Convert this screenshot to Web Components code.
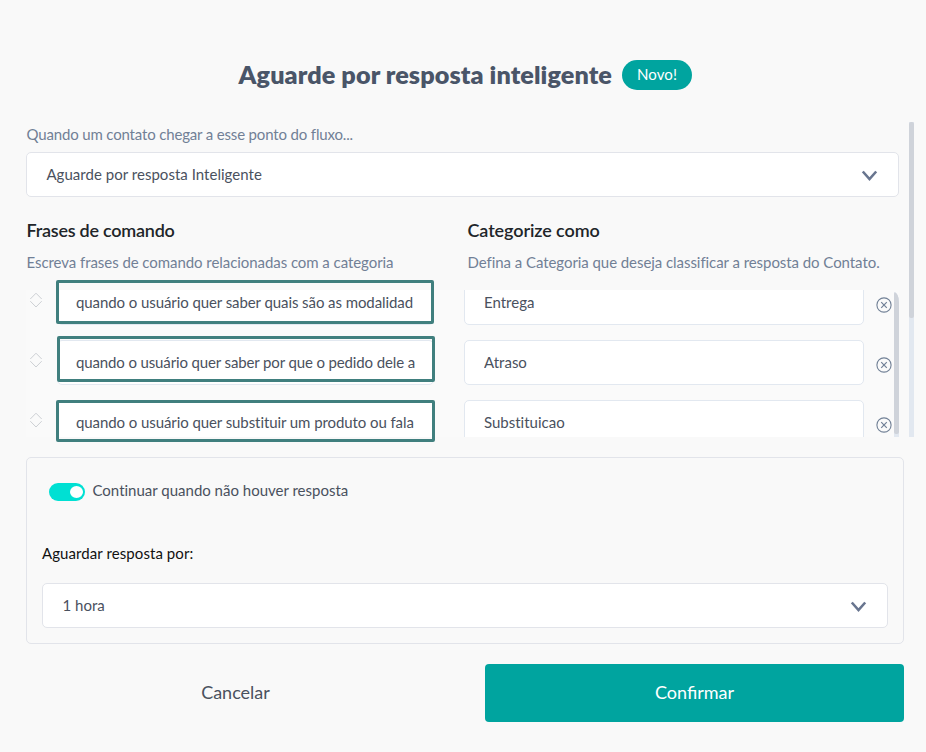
<!DOCTYPE html>
<html lang="pt-BR">
<head>
<meta charset="utf-8">
<title>Aguarde por resposta inteligente</title>
<style>
html,body{margin:0;height:100%;background:#f9f9f9;overflow:hidden}
body{font-family:Lato,"Liberation Sans",sans-serif;font-size:15px;line-height:20px;color:#4a515e}
</style>
</head>
<body>
<flow-dialog></flow-dialog>
<script>
function define(name, html) {
  const t = document.createElement('template');
  t.innerHTML = '<style>*{box-sizing:border-box}:host{box-sizing:border-box}</style>' + html;
  customElements.define(name, class extends HTMLElement {
    connectedCallback() {
      if (this.shadowRoot) return;
      this.attachShadow({mode: 'open'}).append(t.content.cloneNode(true));
    }
  });
}

define('new-badge', `<style>:host{display:flex;align-items:center;justify-content:center;width:70px;height:30px;padding-bottom:2px;border-radius:15px;background:#00a49f;color:#fff;font-size:15px;letter-spacing:.1px}</style><slot></slot>`);

define('select-box', `<style>
:host{display:flex;align-items:center;justify-content:space-between;height:45px;border:1px solid #e2e4ea;border-radius:5px;background:#fff;padding:0 20.5px 0 19.4px}
span{margin-top:-2px;letter-spacing:.03px}
svg{display:block;margin-top:2px}
</style><span><slot></slot></span>
<svg width="17" height="12" viewBox="0 0 17 12"><path d="M1.8 1.5 8.5 9 15.2 1.5" fill="none" stroke="#68758f" stroke-width="2.6"/></svg>`);

define('text-box', `<style>
:host{display:flex;align-items:center;height:45px;border:1px solid #e2e8f0;border-radius:5px;background:#fff;padding:0 19px 2px;font-variant-ligatures:none}
span{overflow:hidden;white-space:nowrap;flex:1;min-width:0}
</style><span><slot></slot></span>`);

define('section-head', `<style>
:host{display:block}
h3{margin:0;font-size:18px;line-height:24px;font-weight:600;color:#212529;letter-spacing:var(--head-spacing)}
p{margin:10px 0 0;color:#718096;white-space:nowrap;letter-spacing:-.06px}
</style><h3><slot name="title"></slot></h3><p><slot></slot></p>`);

define('scroll-rail', `<style>
:host{display:block;width:5px;background:#e2e8f0}
div{background:#cfd3da;border-radius:2px;height:var(--thumb)}
</style><div></div>`);

define('phrase-row', `<style>
:host{display:grid;grid-template-columns:31px 377px 30px 400px 30px;height:45px;align-items:center}
.sort{display:block;margin-top:-5px}
.phrase{letter-spacing:var(--phrase-spacing,-.08px);padding:0 18px 2px}
.close{grid-column:5;justify-self:end;margin:5px 2px 0 0;display:block}
.category{grid-column:4}
</style>
<svg class="sort" width="20" height="18" viewBox="0 0 20 18"><path d="M4.3 8 10 2.2 15.7 8M4.3 10.2 10 16 15.7 10.2" fill="none" stroke="#cdd0d4" stroke-width="1"/></svg>
<text-box class="phrase"><slot name="phrase"></slot></text-box>
<text-box class="category"><slot name="category"></slot></text-box>
<svg class="close" width="16" height="16" viewBox="0 0 16 16" fill="none" stroke="#718096"><circle cx="8" cy="8" r="7.1" stroke-width="1.1"/><path d="M5.2 5.2 10.8 10.8M10.8 5.2 5.2 10.8" stroke-width="1.2"/></svg>`);

define('highlight-frame', `<style>:host{display:block;position:absolute;border:3px solid #407f7e;border-radius:2px}</style>`);

define('toggle-switch', `<style>
:host{display:flex;align-items:center;height:20px;gap:7.5px;font-variant-ligatures:none}
i{display:flex;justify-content:flex-end;width:36px;height:18px;border-radius:9px;background:#00e0d3;padding:3px 2px 3px 0;margin-top:4px}
i::after{content:"";width:13px;height:12px;border-radius:50%;background:#fff}
</style><i></i><span><slot></slot></span>`);

define('action-button', `<style>
:host{display:flex;align-items:center;justify-content:center;height:58px;padding-bottom:2px;border-radius:4px;font-size:18px}
:host([primary]){background:#00a49f;color:#fff}
</style><slot></slot>`);

define('flow-dialog', `<style>
:host{display:block;position:relative;width:926px;height:752px;padding:60px 22px 0 26px}
header{display:flex;gap:10px;justify-content:flex-end;align-items:center;height:30px;padding-right:212px}
h1{margin:-2px 0 0;font-size:25.2px;font-weight:800;line-height:30px;color:#4a5568;white-space:nowrap;letter-spacing:.09px}
.scroll{display:flex;width:888px;height:315px;margin-top:32px;gap:10px;overflow:hidden}
.content{width:873px}
.label{color:#718096;margin-top:2px;margin-bottom:8px;letter-spacing:-.16px;padding-left:.5px}
.heads{display:grid;grid-template-columns:441px 1fr;margin-top:21px;padding-left:.5px}
.list{display:flex;height:147px;margin-top:18px;background:#fafafa;overflow:hidden}
.list scroll-rail{border-top-right-radius:5px 10px;overflow:hidden;margin-top:2px}
.rows{width:868px;display:flex;flex-direction:column;gap:15px;margin-top:-10px;flex:none}
.panel{border:1px solid #e2e4ea;border-radius:5px;height:187px;margin-top:20px;padding:22px 15px 0}
toggle-switch{margin-left:7px}
.wait{color:#111;margin:43px 0 20px;letter-spacing:.08px}
footer{display:grid;grid-template-columns:419px 419px;gap:40px;margin-top:20px}
.f1{left:56px;top:280px;width:378px;height:44px}
.f2{left:57px;top:336px;width:378px;height:46px}
.f3{left:56px;top:400px;width:379px;height:42px}
</style>
<header><h1>Aguarde por resposta inteligente</h1><new-badge>Novo!</new-badge></header>
<div class="scroll">
 <div class="content">
  <div class="label">Quando um contato chegar a esse ponto do fluxo...</div>
  <select-box>Aguarde por resposta Inteligente</select-box>
  <div class="heads">
   <section-head style="--head-spacing:-.24px"><span slot="title">Frases de comando</span>Escreva frases de comando relacionadas com a categoria</section-head>
   <section-head style="--head-spacing:-.1px"><span slot="title">Categorize como</span>Defina a Categoria que deseja classificar a resposta do Contato.</section-head>
  </div>
  <div class="list">
   <div class="rows">
    <phrase-row><span slot="phrase">quando o usuário quer saber quais são as modalidad</span><span slot="category">Entrega</span></phrase-row>
    <phrase-row style="--phrase-spacing:-.13px"><span slot="phrase">quando o usuário quer saber por que o pedido dele a</span><span slot="category">Atraso</span></phrase-row>
    <phrase-row><span slot="phrase">quando o usuário quer substituir um produto ou fala</span><span slot="category">Substituicao</span></phrase-row>
   </div>
   <scroll-rail style="--thumb:142px"></scroll-rail>
  </div>
 </div>
 <scroll-rail style="--thumb:196px"></scroll-rail>
</div>
<div class="panel">
 <toggle-switch>Continuar quando não houver resposta</toggle-switch>
 <div class="wait">Aguardar resposta por:</div>
 <select-box>1 hora</select-box>
</div>
<footer><action-button>Cancelar</action-button><action-button primary>Confirmar</action-button></footer>
<highlight-frame class="f1"></highlight-frame>
<highlight-frame class="f2"></highlight-frame>
<highlight-frame class="f3"></highlight-frame>`);
</script>
</body>
</html>
